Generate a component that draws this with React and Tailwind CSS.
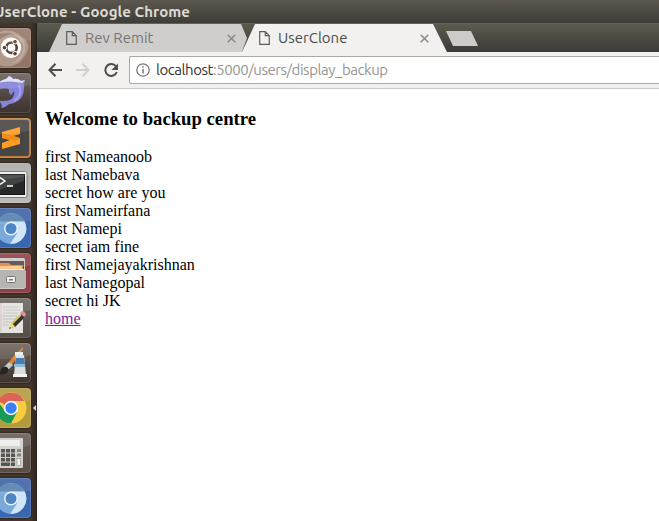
import React from "react";

function FileIcon() {
  return (
    <svg width="11" height="14" viewBox="0 0 11 14" fill="none" stroke="#5c5c5c" strokeWidth="1.2" className="shrink-0">
      <path d="M.7.7h5.6l4 4v8.6H.7zM6.3.7v4h4" />
    </svg>
  );
}

function CloseIcon() {
  return (
    <svg width="9" height="9" viewBox="0 0 9 9" stroke="#898887" strokeWidth="1.5" className="shrink-0">
      <path d="M.7.7l7.6 7.6M8.3.7L.7 8.3" />
    </svg>
  );
}

function Tile({ tone, children }) {
  return (
    <div className={`-ml-[9px] h-10 w-10 shrink-0 overflow-hidden rounded-[4px] shadow-[0_0_1px_1px_rgba(20,14,10,0.35)] ${tone}`}>
      <svg width="40" height="40" viewBox="-9 0 40 40">
        {children}
        <path d="M-9 0H31V12Q15 17-9 16z" fill="#fff" opacity=".1" />
        <rect x="-8.5" y=".5" width="39" height="39" rx="3.5" fill="none" stroke="#fff" opacity=".14" />
      </svg>
    </div>
  );
}

function Ubuntu() {
  return (
    <Tile tone="bg-linear-to-b from-[#96786a] to-[#927565]">
      <path d="M-9 20Q8 0 22 9T19 35Q4 43-9 32z" fill="#c9b7a9" opacity=".55" />
      <path d="M-9 8Q14-5 24 13Q29 30 11 36Q30 25 20 11Q12 1-9 8z" fill="#e4d6cc" opacity=".35" />
      <circle cx="11" cy="19.700" r="10.200" fill="#fff" />
      <circle cx="11.500" cy="19.700" r="5.200" fill="none" stroke="#5b4034" strokeWidth="2.600" />
      <g fill="#5b4034" stroke="#fff" strokeWidth="1">
        <circle cx="4.500" cy="19.700" r="2.300" />
        <circle cx="15" cy="13.700" r="2.300" />
        <circle cx="15" cy="25.700" r="2.300" />
      </g>
    </Tile>
  );
}

function Dolphin() {
  return (
    <Tile tone="bg-linear-to-b from-[#6b615b] to-[#3d332e]">
      <path d="M-4 12Q0 7 6 6L9 3Q12 4 13 6Q18 5 21 8L25 7Q24 10 24 15Q24 25 16 29Q12 31 9 31L5 34L1 35Q3 32 -1 28Q6 28 10 27Q15 24 14 18L11 22Q8 20 9 16Q4 14-4 17z" fill="#8583da" />
      <path d="M-2 10Q3 6 6 6L9 3Q12 4 13 6Q18 5 21 8L25 7L22 10Q10 7 -2 10z" fill="#e0e0f3" />
      <path d="M19 12Q23 22 14 28" fill="none" stroke="#a3a1ee" strokeWidth="2" />
    </Tile>
  );
}

function Sublime() {
  return (
    <Tile tone="bg-[#474644]">
      <path d="M2 14L20 9V16L13 18L20 20V26L2 31V25L10 22L2 20z" fill="#ff9c21" />
      <path d="M2 15L13 18L20 20V22L10 22L2 20z" fill="#f08d19" />
      <rect x="-8" y="1" width="38" height="38" rx="3" fill="none" stroke="#bd7b35" strokeWidth="2" />
    </Tile>
  );
}

function Terminal() {
  return (
    <Tile tone="bg-linear-to-b from-[#a9a9a5] to-[#bcbbb8]">
      <rect x="-9" y="8.500" width="36" height="26" rx="1.500" fill="#eee" stroke="#777" />
      <rect x="-9" y="11.500" width="33.500" height="20" fill="#252827" stroke="#111" />
      <path d="M-9 12H24V18L-9 30z" fill="#fff" opacity=".13" />
      <path d="M0 14.500l5 3.500-5 3.500M7 23h6" fill="none" stroke="#fff" strokeWidth="1.500" />
    </Tile>
  );
}

function Chromium() {
  return (
    <Tile tone="bg-linear-to-b from-[#3f62a4] to-[#3967b1]">
      <circle cx="11" cy="20.500" r="15.300" fill="#78a8d8" />
      <path d="M-2.500 13.500A15.300 15.300 0 0 1 24.300 13.500H11z" fill="#527fae" />
      <path d="M11 13.500H24.600A15.300 15.300 0 0 1 10 35.800L17 25z" fill="#d0e5f5" />
      <path d="M-2.500 13.500A15.300 15.300 0 0 0 10 35.800L16.500 26Q10 29 5.500 24z" fill="#79aadb" />
      <circle cx="11" cy="20.500" r="7" fill="#e8f3fb" />
      <circle cx="11" cy="20.500" r="5.500" fill="#4e86c4" />
    </Tile>
  );
}

function Files() {
  return (
    <Tile tone="bg-[#8e4048]">
      <rect x="-9" y="5" width="34" height="31" rx="1.500" fill="#cccac6" />
      <rect x="-9" y="8" width="33" height="9" fill="#564a42" />
      <path d="M-9 10H9L11 12H23V18H-9z" fill="#e2833d" />
      <path d="M-9 13H21L23 17H-9z" fill="#ffc589" />
      <path d="M-9 16H23L26 18V35H-9z" fill="#b6b5b1" />
      <path d="M-9 16.500H24" stroke="#efeeeb" />
      <rect x="6.500" y="23.500" width="9" height="6" rx="1" fill="#eee" stroke="#777" />
      <rect x="9" y="26" width="4" height="1.500" fill="#777" />
    </Tile>
  );
}

function Editor() {
  return (
    <Tile tone="bg-linear-to-b from-[#6c6660] to-[#554d47]">
      <rect x="-9" y="5" width="32" height="30" fill="#e2e2df" />
      <path d="M3 9H18M3 12H20M3 15H18M3 18H17M3 21H14M3 24H11M3 27H9" stroke="#c4c4c1" />
      <path d="M1 5V34" stroke="#e3bab7" />
      <path d="M9 31L11 25L21 15L25 19L15 29z" fill="#d0c35d" />
      <path d="M12 26L22 16L25 19L15 29z" fill="#34312c" />
      <path d="M11.500 26.500L21 17" stroke="#d8ca60" strokeWidth="1.500" />
      <path d="M9 31L11 25L15 28z" fill="#e9d98b" />
      <path d="M20 15L22 13Q26 14 26 17L24 19z" fill="#da8ea8" />
      <path d="M9 31l1-2 1 1z" fill="#222" />
    </Tile>
  );
}

function Paint() {
  return (
    <Tile tone="bg-linear-to-b from-[#6f655d] to-[#3f352f]">
      <path d="M23 4L11 16L8 21L11 23L14 19L23 6z" fill="#d98236" />
      <path d="M4 24L9 19L13 22L8 27z" fill="#c6c6c5" />
      <path d="M7 24Q3 23 1 27Q0 30-2 31Q6 33 9 27z" fill="#242424" />
      <path d="M15 9H23V13H15z" fill="#ecedea" />
      <path d="M16 12H24L26 32H14z" fill="#dadfde" />
      <path d="M16 15H24L25 21H15z" fill="#477eaf" />
      <path d="M14 21H25V24H14z" fill="#91b9d3" />
      <path d="M13 31H27V34H13z" fill="#f3f3f1" />
    </Tile>
  );
}

function Chrome() {
  return (
    <Tile tone="bg-[#b29b3d]">
      <circle cx="11" cy="20" r="15.500" fill="#f8cc41" />
      <path d="M11 20L-2.500 12.500A15.500 15.500 0 0 1 24.500 13H11z" fill="#da5246" />
      <path d="M-2.500 12.500A15.500 15.500 0 0 0 11 35.500L17 24L6 25z" fill="#159b56" />
      <circle cx="11" cy="20" r="7.200" fill="#fff" />
      <circle cx="11" cy="20" r="5.700" fill="#3980f4" />
    </Tile>
  );
}

function Calculator() {
  return (
    <Tile tone="bg-linear-to-b from-[#695e57] to-[#594d45]">
      <rect x="-9" y="5" width="32" height="30" rx="1" fill="#d0cfca" />
      <rect x="-9" y="7" width="29" height="6" fill="#ecece8" />
      <g fill="#555553">
        <rect x="1" y="16" width="4" height="3.500" /><rect x="6" y="16" width="4" height="3.500" /><rect x="11" y="16" width="4" height="3.500" />
        <rect x="1" y="20.500" width="4" height="3.500" /><rect x="6" y="20.500" width="4" height="3.500" /><rect x="11" y="20.500" width="4" height="3.500" />
        <rect x="1" y="25" width="4" height="3.500" /><rect x="6" y="25" width="4" height="3.500" /><rect x="11" y="25" width="4" height="3.500" />
        <rect x="1" y="29.500" width="9" height="3.500" /><rect x="11" y="29.500" width="4" height="3.500" />
      </g>
      <path d="M17 16h4v3h-4zm0 4.500h4v3h-4z" fill="#858582" />
      <rect x="17" y="25.500" width="3.500" height="7" fill="#edf3f5" stroke="#8a8c8c" strokeWidth=".6" />
    </Tile>
  );
}

export default function App() {
  return (
    <div className="flex h-[521px] w-[659px] flex-col overflow-hidden bg-white font-['Ubuntu','Noto_Sans',sans-serif]">
      <header className="flex h-[23px] shrink-0 items-center bg-linear-to-b from-[#5c574f] to-[#3e3d38]">
        <span className="-ml-[6px] whitespace-nowrap text-[15px] leading-[22px] font-bold tracking-[0.08px] text-[#dfdbd2]">UserClone - Google Chrome</span>
      </header>
      <div className="flex min-h-0 flex-1">
        <aside className="flex w-[37px] shrink-0 flex-col gap-[5px] overflow-hidden border-r border-[#29231d] bg-[#43352b] bg-linear-to-r from-[#44362b] via-[#44362b] via-85% to-[#30271f] pt-[5px]">
          <Ubuntu />
          <Dolphin />
          <Sublime />
          <Terminal />
          <Chromium />
          <Files />
          <Editor />
          <Paint />
          <div className="flex shrink-0 items-center justify-between">
            <Chrome />
            <span className="h-0 w-0 border-y-[3px] border-r-[3px] border-y-transparent border-r-[#ddd9d5]" />
          </div>
          <Calculator />
          <Chromium />
        </aside>
        <div className="flex min-w-0 flex-1 flex-col">
          <nav className="flex h-[29px] shrink-0 border-t border-[#62625a] bg-linear-to-b from-[#5a5a4e] to-[#3c3c37] pl-3">
            <div className="flex h-7 w-[198px] shrink-0 items-center bg-[#cfcecd] pr-[11px] pl-[17px] [clip-path:polygon(0_100%,13px_0,192px_0,198px_14px,193px_100%)]">
              <FileIcon />
              <span className="ml-[8px] flex-1 whitespace-nowrap text-[15px] leading-5 text-[#777573]">Rev Remit</span>
              <CloseIcon />
            </div>
            <div className="-ml-[5px] flex h-7 w-[205px] shrink-0 items-center bg-[#f2f1f0] pr-[18px] pl-[17px] [clip-path:polygon(0_100%,13px_0,191px_0,100%_100%)]">
              <FileIcon />
              <span className="ml-[8px] flex-1 whitespace-nowrap text-[15px] leading-5 text-[#4c4c4c]">UserClone</span>
              <CloseIcon />
            </div>
            <div className="mt-[7px] -ml-px h-[15px] w-8 bg-[#cdcccb] [clip-path:polygon(0_0,25px_0,100%_100%,7px_100%)]" />
          </nav>
          <div className="flex h-[37px] shrink-0 items-center border-b border-[#cbcac9] bg-[#f2f1f0] pl-[11px]">
            <svg width="14" height="14" viewBox="0 0 14 14" fill="none" stroke="#4d4d4d" strokeWidth="2"><path d="M14 7H1.500M7.500 .8L1.500 7l6 6.200" /></svg>
            <svg className="ml-[14px]" width="14" height="14" viewBox="0 0 14 14" fill="none" stroke="#cfcecd" strokeWidth="2"><path d="M0 7h12.500M6.500 .8l6 6.200-6 6.200" /></svg>
            <svg className="ml-[14px]" width="15" height="15" viewBox="0 0 15 15"><path d="M12 3.500A5.900 5.900 0 1 0 12.800 9" fill="none" stroke="#4d4d4d" strokeWidth="2" /><path d="M14 .5V7H7.500z" fill="#4d4d4d" /></svg>
            <div className="ml-[10px] flex h-[28px] flex-1 items-center rounded-l-[2px] border border-r-0 border-[#a9a9a9] bg-white pl-[6px]">
              <svg width="14" height="14" viewBox="0 0 14 14"><circle cx="7" cy="7" r="6.200" fill="none" stroke="#777" strokeWidth="1.300" /><path d="M7 6v4.500M7 3.300v1.500" stroke="#777" strokeWidth="1.500" /></svg>
              <span className="ml-[6px] whitespace-nowrap text-[15px] leading-5 tracking-[-0.45px] text-[#969696]"><span className="text-[#333]">localhost</span>:5000/users/display_backup</span>
            </div>
          </div>
          <main className="flex-1 bg-white pl-2 font-['Liberation_Serif',serif] text-[16px] leading-[18px] text-black">
            <h3 className="mt-[19px] mb-[18px] text-[18.72px] leading-[22px] font-bold">Welcome to backup centre</h3>
            <p>first Nameanoob</p>
            <p>last Namebava</p>
            <p>secret how are you</p>
            <p>first Nameirfana</p>
            <p>last Namepi</p>
            <p>secret iam fine</p>
            <p>first Namejayakrishnan</p>
            <p>last Namegopal</p>
            <p>secret hi JK</p>
            <a href="#" className="text-[#7a1a9b] underline">home</a>
          </main>
        </div>
      </div>
    </div>
  );
}
